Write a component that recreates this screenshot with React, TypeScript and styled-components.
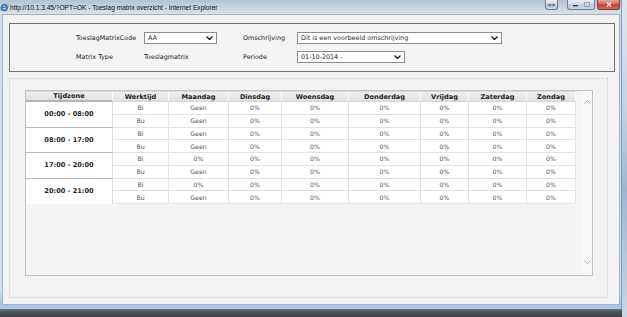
import React from "react";
import styled, { createGlobalStyle } from "styled-components";

const GlobalStyle = createGlobalStyle`
  html, body {
    margin: 0;
    padding: 0;
  }
  body {
    font-family: "DejaVu Sans", Verdana, sans-serif;
    color: #333;
  }
`;

const days = ["Maandag", "Dinsdag", "Woensdag", "Donderdag", "Vrijdag", "Zaterdag", "Zondag"];

const zones = [
  { time: "00:00 - 08:00", bi: "Geen", bu: "Geen" },
  { time: "08:00 - 17:00", bi: "Geen", bu: "Geen" },
  { time: "17:00 - 20:00", bi: "0%", bu: "Geen" },
  { time: "20:00 - 21:00", bi: "0%", bu: "Geen" },
];

const Screen = styled.div`
  width: 627px;
  height: 317px;
  overflow: hidden;
  display: flex;
  flex-direction: column;
  background: linear-gradient(180deg, #dfe7ef 0%, #c3d2e2 35%, #9fb6cf 60%, #c9d6e3 100%);
`;

const Window = styled.div`
  width: 622px;
  height: 309px;
  box-sizing: border-box;
  display: flex;
  flex-direction: column;
  padding-bottom: 4px;
  background: linear-gradient(180deg, #bccbdc 0%, #d3deea 6%, #d4e0ec 94%, #a9c7e9 98%);
  border-right: 1px solid #7f98b4;
`;

const TitleBar = styled.div`
  height: 14px;
  display: flex;
  align-items: flex-start;
  padding-right: 1px;
  background: linear-gradient(180deg, #b3c3d5 0%, #c9d6e4 60%, #d7e2ed 100%);
`;

const TitleText = styled.div`
  margin-top: 3px;
  margin-left: 1px;
  font-family: "Liberation Sans", Arial, sans-serif;
  font-size: 6.6px;
  line-height: 9px;
  color: #111;
  white-space: nowrap;
  flex: 1;
`;

const IeIcon = styled.svg`
  width: 9px;
  height: 10px;
  margin-top: 2px;
  flex: none;
`;

const Controls = styled.div`
  display: flex;
  gap: 9px;
`;

const ControlGroup = styled.div`
  display: flex;
  gap: 2px;
`;

const CtlButton = styled.div<{ $w: number; $red?: boolean }>`
  width: ${(p) => p.$w}px;
  height: 10px;
  box-sizing: border-box;
  border: 1px solid ${(p) => (p.$red ? "#8a3a33" : "#6b7d93")};
  border-top: none;
  border-radius: 0 0 3px 3px;
  display: flex;
  align-items: center;
  justify-content: center;
  background: ${(p) =>
    p.$red
      ? "linear-gradient(180deg, #e6a598 0%, #d3685a 45%, #c2402f 55%, #d66b58 100%)"
      : "linear-gradient(180deg, #e8eef5 0%, #cfdbe8 45%, #b8c9dc 55%, #ccd9e7 100%)"};
`;

const Content = styled.div`
  flex: 1;
  margin: 0 1px 0 2px;
  display: flex;
  flex-direction: column;
  background: #f3f3f3;
  border: 1px solid #a3b1c1;
`;

const FilterBox = styled.div`
  margin: 8px 4px 0 6px;
  height: 49px;
  box-sizing: border-box;
  border: 1px solid #6f6f6f;
  background: #f4f4f4;
  padding: 8px 0 0 66px;
  display: grid;
  grid-template-columns: 68px 99px 54px auto;
  grid-auto-rows: 12px;
  row-gap: 7px;
  align-items: center;
`;

const Label = styled.div`
  font-size: 6.4px;
  color: #222;
  white-space: nowrap;
`;

const SelectBox = styled.div<{ $w: number }>`
  width: ${(p) => p.$w}px;
  height: 12px;
  box-sizing: border-box;
  border: 1px solid #8c8c8c;
  background: #fff;
  padding: 0 3px 0 3px;
  display: flex;
  align-items: center;
  justify-content: space-between;
  font-size: 6.4px;
  color: #2a2a2a;
  white-space: nowrap;
`;

const Panel = styled.div`
  flex: 1;
  margin: 6px 11px 6px 6px;
  border: 1px dotted #d2d2d2;
  padding: 11px 14px 21px 15px;
  display: flex;
`;

const TableFrame = styled.div`
  flex: 1;
  display: flex;
  border: 1px solid #c3c3c3;
  background: #f4f4f4;
`;

const Grid = styled.div`
  align-self: flex-start;
  display: grid;
  grid-template-columns: 87px 56px 60px 53px 67px 72px 48px 58px 49px;
  grid-template-rows: 11px repeat(8, 12.75px);
  background: #fff;
`;

const HeadCell = styled.div<{ $zone?: boolean }>`
  display: flex;
  align-items: center;
  justify-content: center;
  box-sizing: border-box;
  font-size: 6.6px;
  font-weight: bold;
  color: #1e1e1e;
  background: linear-gradient(180deg, #efefef 0%, #e1e1e1 100%);
  border-top: 1px dotted #d2d2d2;
  border-right: 1px solid #f8f8f8;
  border-bottom: ${(p) => (p.$zone ? "2px solid #b4b4b4" : "1px solid #d6d6d6")};
`;

const ZoneCell = styled.div<{ $last?: boolean }>`
  grid-row: span 2;
  display: flex;
  align-items: center;
  justify-content: center;
  box-sizing: border-box;
  font-size: 6.6px;
  font-weight: bold;
  color: #1e1e1e;
  background: #fff;
  border-right: 1px solid #dedede;
  border-bottom: ${(p) => (p.$last ? "none" : "1px solid #bdbdbd")};
`;

const Cell = styled.div`
  display: flex;
  align-items: center;
  justify-content: center;
  box-sizing: border-box;
  font-size: 6.2px;
  color: #555;
  background: #fff;
  border-right: 1px solid #e2e2e2;
  border-bottom: 1px solid #e2e2e2;
`;

const Gutter = styled.div`
  flex: 1;
`;

const ScrollTrack = styled.div`
  width: 10px;
  display: flex;
  flex-direction: column;
  justify-content: space-between;
  align-items: center;
  padding: 9px 0 11px;
  background: #f8f8f8;
`;

const Desk = styled.div`
  flex: 1;
  width: 622px;
  background: linear-gradient(180deg, #6b7786 0%, #4b5159 40%, #3e4248 100%);
`;

const Chevron: React.FC<{ up?: boolean; color?: string; w?: number }> = ({ up, color = "#b3b3b3", w = 1 }) => (
  <svg width="7" height="4" viewBox="0 0 7 4">
    <path
      d={up ? "M0.5 3.5 L3.5 0.5 L6.5 3.5" : "M0.5 0.5 L3.5 3.5 L6.5 0.5"}
      fill="none"
      stroke={color}
      strokeWidth={w}
    />
  </svg>
);

const Select: React.FC<{ w: number; value: string }> = ({ w, value }) => (
  <SelectBox $w={w}>
    <span>{value}</span>
    <Chevron color="#1a1a1a" w={1.4} />
  </SelectBox>
);

const App: React.FC = () => {
  return (
    <>
      <GlobalStyle />
      <Screen>
        <Window>
          <TitleBar>
            <IeIcon viewBox="0 0 9 10">
              <ellipse cx="4.5" cy="5.5" rx="4.6" ry="2.2" fill="none" stroke="#e6b33a" strokeWidth="1" transform="rotate(-30 4.5 5.5)" />
              <circle cx="4.3" cy="5.6" r="2.8" fill="none" stroke="#2a6fc9" strokeWidth="1.6" />
              <path d="M2 5.4 H6.8" stroke="#2a6fc9" strokeWidth="1.1" />
            </IeIcon>
            <TitleText>http://10.1.3.45/?OPT=OK - Toeslag matrix overzicht - Internet Explorer</TitleText>
            <Controls>
              <CtlButton $w={13}>
                <svg width="7" height="4" viewBox="0 0 7 4">
                  <path d="M0.5 2 H6.5 M2 0.5 L0.5 2 L2 3.5 M5 0.5 L6.5 2 L5 3.5" fill="none" stroke="#3b4a5c" strokeWidth="0.8" />
                </svg>
              </CtlButton>
              <ControlGroup>
                <CtlButton $w={28}>
                  <svg width="20" height="5" viewBox="0 0 20 5">
                    <rect x="2" y="3" width="5" height="1.4" fill="#2f3d4e" />
                    <rect x="13.5" y="0.5" width="5" height="4" fill="none" stroke="#8797aa" strokeWidth="0.8" />
                  </svg>
                </CtlButton>
                <CtlButton $w={23} $red>
                  <svg width="6" height="5" viewBox="0 0 6 5">
                    <path d="M1 0.5 L5 4.5 M5 0.5 L1 4.5" stroke="#fff" strokeWidth="1.3" />
                  </svg>
                </CtlButton>
              </ControlGroup>
            </Controls>
          </TitleBar>

          <Content>
            <FilterBox>
              <Label>ToeslagMatrixCode</Label>
              <Select w={73} value="AA" />
              <Label>Omschrijving</Label>
              <Select w={205} value="Dit is een voorbeeld omschrijving" />
              <Label>Matrix Type</Label>
              <Label>Toeslagmatrix</Label>
              <Label>Periode</Label>
              <Select w={108} value="01-10-2014 -" />
            </FilterBox>

            <Panel>
              <TableFrame>
                <Grid>
                  <HeadCell $zone>Tijdzone</HeadCell>
                  <HeadCell>Werktijd</HeadCell>
                  {days.map((d) => (
                    <HeadCell key={d}>{d}</HeadCell>
                  ))}
                  {zones.map((z, i) => (
                    <React.Fragment key={z.time}>
                      <ZoneCell $last={i === zones.length - 1}>{z.time}</ZoneCell>
                      <Cell>Bi</Cell>
                      <Cell>{z.bi}</Cell>
                      {days.slice(1).map((d) => (
                        <Cell key={d}>0%</Cell>
                      ))}
                      <Cell>Bu</Cell>
                      <Cell>{z.bu}</Cell>
                      {days.slice(1).map((d) => (
                        <Cell key={d}>0%</Cell>
                      ))}
                    </React.Fragment>
                  ))}
                </Grid>
                <Gutter />
                <ScrollTrack>
                  <Chevron up />
                  <Chevron />
                </ScrollTrack>
              </TableFrame>
            </Panel>
          </Content>
        </Window>
        <Desk />
      </Screen>
    </>
  );
};

export default App;
